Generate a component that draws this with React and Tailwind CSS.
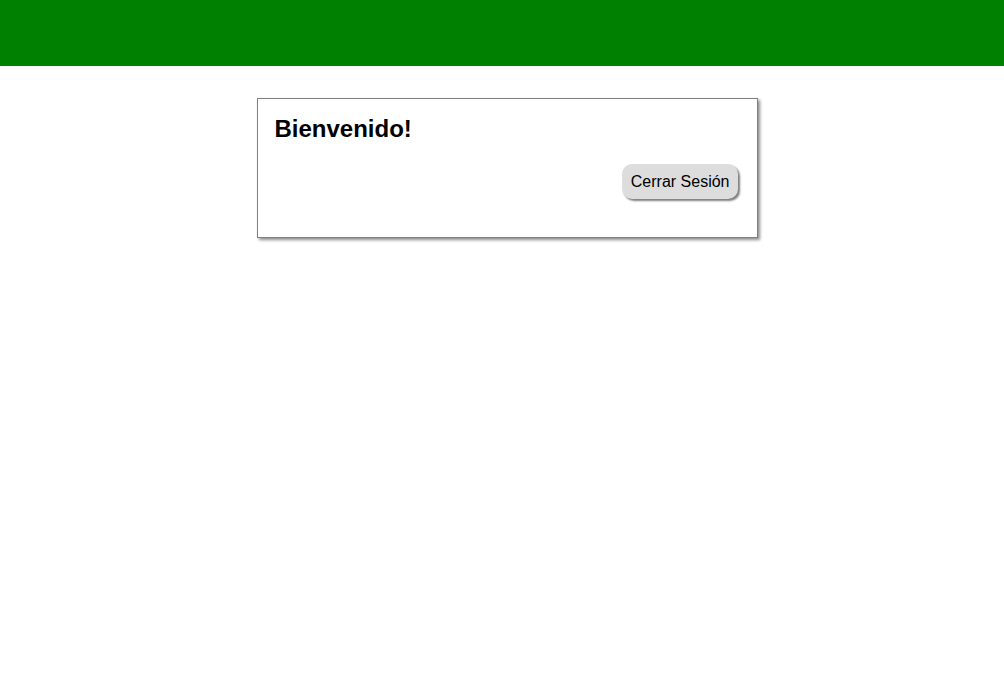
export default function App() {
  return (
    <div className="min-h-screen bg-white font-['Liberation_Sans',Arial,sans-serif] text-black">
      <header className="h-[66px] bg-[#008000]" />

      <main className="flex justify-center pl-[10px] pt-[32px]">
        <div className="w-[501px] border border-[#808080] bg-white pt-4 pl-[17px] pr-[19px] pb-[38px] shadow-[2px_2px_3px_rgba(0,0,0,0.45)]">
          <h2 className="mb-[22px] text-[24px] font-bold leading-[27px]">Bienvenido!</h2>
          <div className="flex justify-end">
            <button
              type="button"
              className="h-[35px] rounded-[10px] bg-[#dddddd] pl-[9px] pr-[8px] text-[16px] leading-[19px] text-black shadow-[2px_2px_2px_rgba(0,0,0,0.5)]"
            >
              Cerrar Sesión
            </button>
          </div>
        </div>
      </main>
    </div>
  )
}
